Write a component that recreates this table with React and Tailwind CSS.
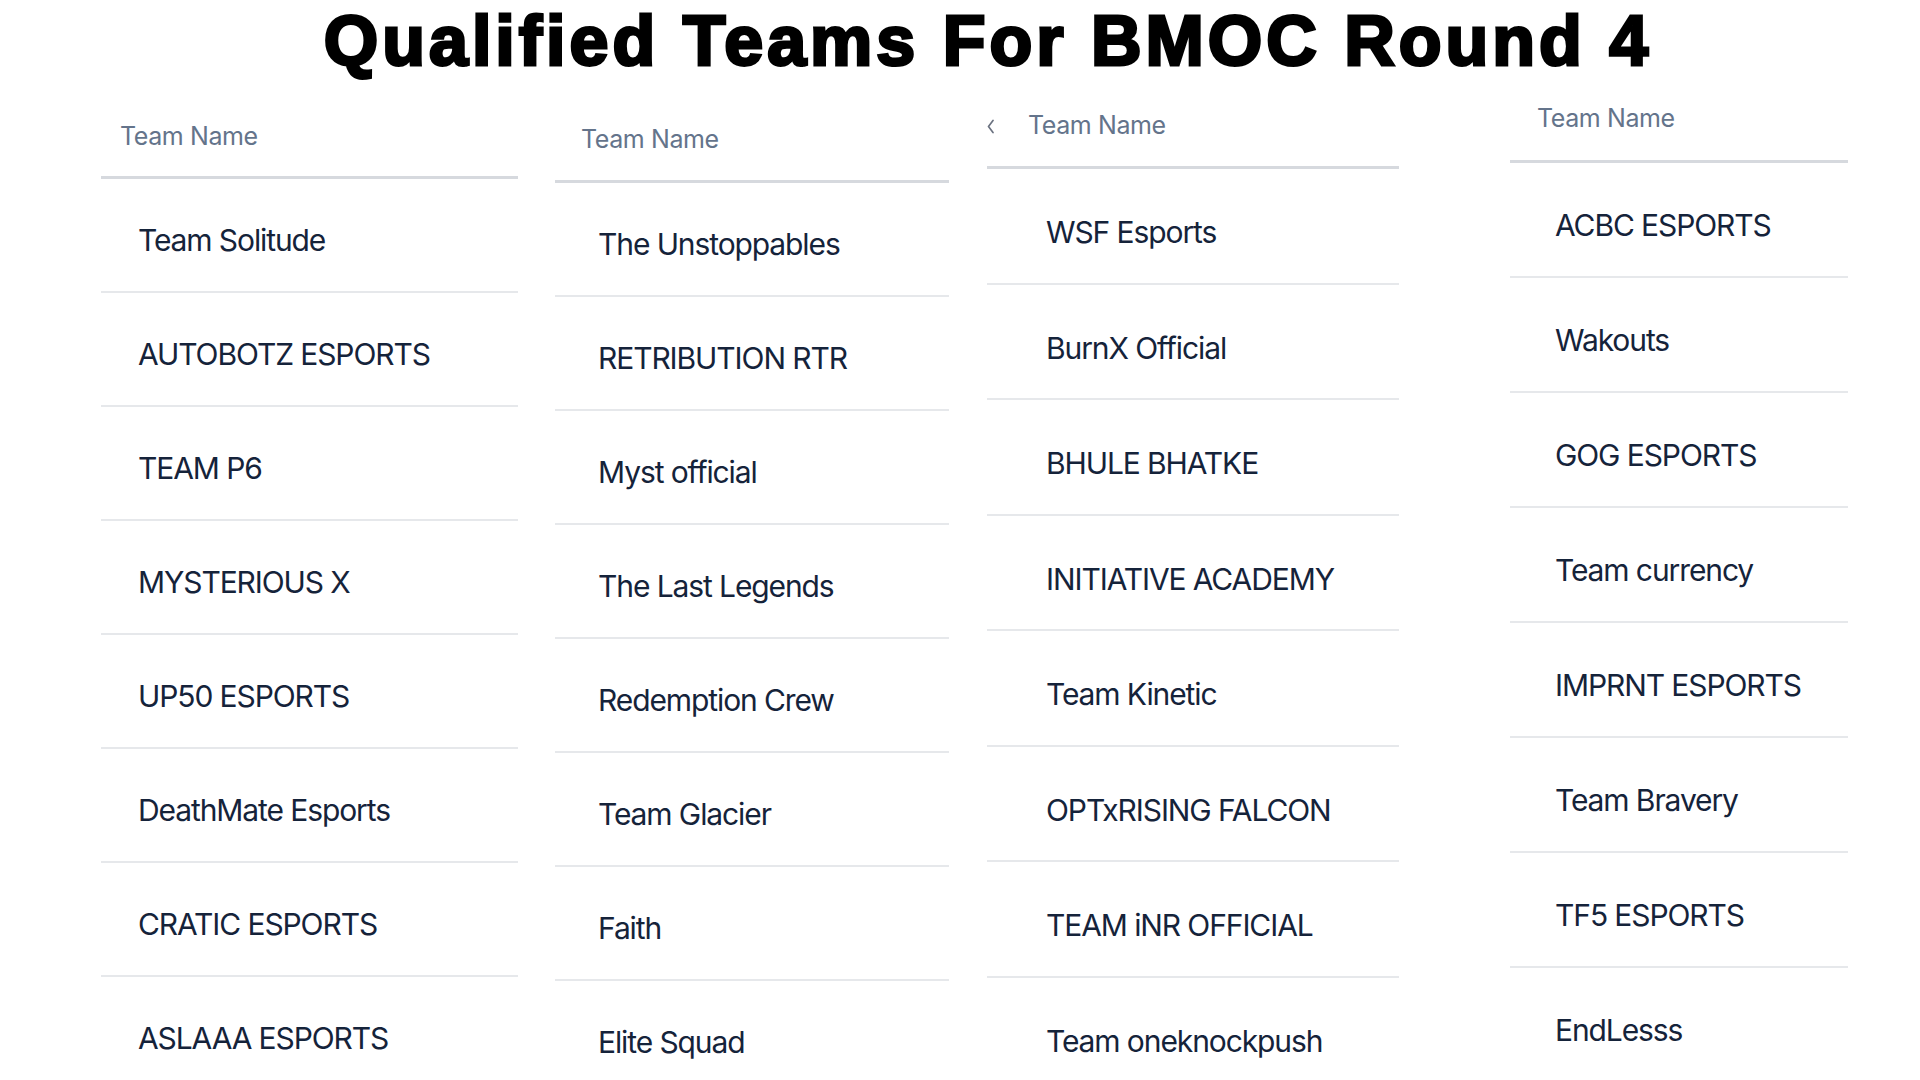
import React from "react";

const columns = [
  {
    col: "ml-[101px] w-[417px]",
    header: "h-[99px] pt-[41px] pl-[19px]",
    row: "h-[114px] pt-[43px] pl-[37px]",
    chevron: false,
    teams: ["Team Solitude", "AUTOBOTZ ESPORTS", "TEAM P6", "MYSTERIOUS X", "UP50 ESPORTS", "DeathMate Esports", "CRATIC ESPORTS", "ASLAAA ESPORTS"],
  },
  {
    col: "ml-[37px] w-[394px]",
    header: "h-[103px] pt-[44px] pl-[26px]",
    row: "h-[114px] pt-[43px] pl-[43px]",
    chevron: false,
    teams: ["The Unstoppables", "RETRIBUTION RTR", "Myst official", "The Last Legends", "Redemption Crew", "Team Glacier", "Faith", "Elite Squad"],
  },
  {
    col: "ml-[38px] w-[412px]",
    header: "h-[89px] pt-[30px] pl-[41px]",
    row: "h-[115.5px] pt-[45px] pl-[59px]",
    chevron: true,
    teams: ["WSF Esports", "BurnX Official", "BHULE BHATKE", "INITIATIVE ACADEMY", "Team Kinetic", "OPTxRISING FALCON", "TEAM iNR OFFICIAL", "Team oneknockpush"],
  },
  {
    col: "ml-[111px] w-[338px]",
    header: "h-[83px] pt-[23px] pl-[27px]",
    row: "h-[115px] pt-[44px] pl-[45px]",
    chevron: false,
    teams: ["ACBC ESPORTS", "Wakouts", "GOG ESPORTS", "Team currency", "IMPRNT ESPORTS", "Team Bravery", "TF5 ESPORTS", "EndLesss"],
  },
];

function Column({ c }) {
  return (
    <div className={`${c.col} shrink-0 flex flex-col`}>
      <div className={`${c.header} relative border-b-[3px] border-[#d6d9de]`}>
        {c.chevron && (
          <svg
            className="absolute left-0 top-[39px]"
            width="7"
            height="15"
            viewBox="0 0 7 15"
            fill="none"
          >
            <path d="M6 1.5 L1.5 7.5 L6 13.5" stroke="#6b7280" strokeWidth="1.7" strokeLinecap="round" strokeLinejoin="round" />
          </svg>
        )}
        <div className="text-[25px] leading-[30px] text-[#64748b] font-normal tracking-[-0.4px]">Team Name</div>
      </div>
      {c.teams.map((t) => (
        <div key={t} className={`${c.row} shrink-0 border-b-2 border-[#e6e8eb]`}>
          <div className="text-[30px] leading-[36px] text-[#15233a] font-normal tracking-[-1.1px] whitespace-nowrap">{t}</div>
        </div>
      ))}
    </div>
  );
}

export default function App() {
  return (
    <div className="w-[1920px] h-[1080px] overflow-hidden bg-white font-['Inter',sans-serif]">
      <div className="h-[80px] pt-[6px] pl-[56px] flex justify-center">
        <h1 className="font-['Liberation_Sans',Arial,sans-serif] font-bold text-[70px] leading-[70px] text-black tracking-[4px] [-webkit-text-stroke:3px_black] whitespace-nowrap">
          Qualified Teams For BMOC Round 4
        </h1>
      </div>
      <div className="flex items-start">
        {columns.map((c, i) => (
          <Column key={i} c={c} />
        ))}
      </div>
    </div>
  );
}
